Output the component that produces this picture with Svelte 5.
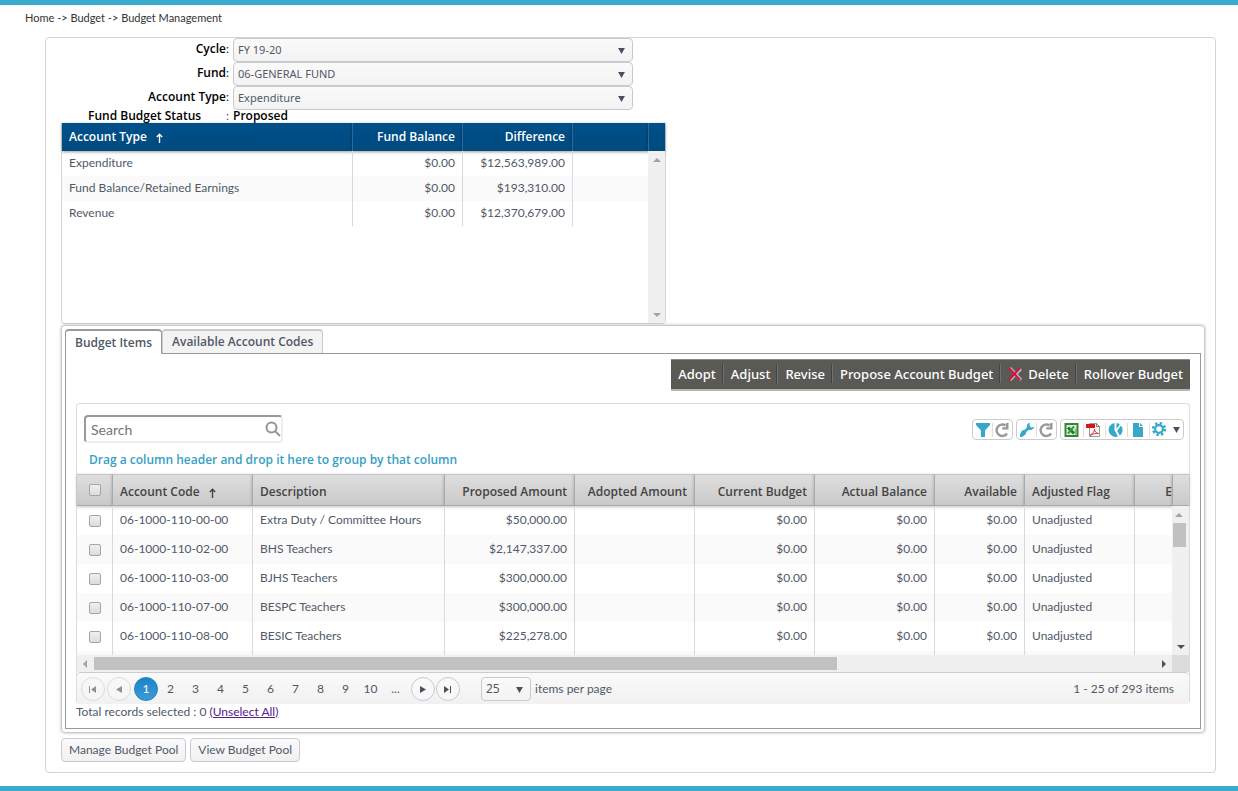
<script>
    const funds = [
        { type: "Expenditure", balance: "$0.00", difference: "$12,563,989.00" },
        { type: "Fund Balance/Retained Earnings", balance: "$0.00", difference: "$193,310.00" },
        { type: "Revenue", balance: "$0.00", difference: "$12,370,679.00" },
    ];

    const filters = [
        { id: "cycle", label: "Cycle", value: "FY 19-20" },
        { id: "fund", label: "Fund", value: "06-GENERAL FUND" },
        { id: "account-type", label: "Account Type", value: "Expenditure" },
    ];

    const items = [
        { code: "06-1000-110-00-00", description: "Extra Duty / Committee Hours", proposed: "$50,000.00" },
        { code: "06-1000-110-02-00", description: "BHS Teachers", proposed: "$2,147,337.00" },
        { code: "06-1000-110-03-00", description: "BJHS Teachers", proposed: "$300,000.00" },
        { code: "06-1000-110-07-00", description: "BESPC Teachers", proposed: "$300,000.00" },
        { code: "06-1000-110-08-00", description: "BESIC Teachers", proposed: "$225,278.00" },
    ];

    const pages = ["2", "3", "4", "5", "6", "7", "8", "9", "10", "..."];

    let search = $state("");
    let selected = $state([]);
    let activeTab = $state("items");

    function unselectAll(e) {
        e.preventDefault();
        selected = [];
    }

    function toggleAll(e) {
        selected = e.target.checked ? items.map((item) => item.code) : [];
    }
</script>

{#snippet refresh()}
    <svg viewBox="0 0 16 16" width="16" height="16">
        <path d="M13 11.500A5.700 5.700 0 1 1 11.500 3.500" fill="none" stroke="#999" stroke-width="2.400" />
        <path d="M14.500 1v6.500H8.200V5.200h3.800V1z" fill="#999" />
    </svg>
{/snippet}

<div class="page">
    <nav class="breadcrumb">Home -> Budget -> Budget Management</nav>

    <main class="panel">
        <form class="filters">
            {#each filters as filter}
                <div class="field">
                    <label for={filter.id}><b>{filter.label}</b>:</label>
                    <div class="select">
                        <select id={filter.id}>
                            <option>{filter.value}</option>
                        </select>
                        <svg viewBox="0 0 8 7" width="7" height="6"><path d="M0 0h8L4 7z" /></svg>
                    </div>
                </div>
            {/each}
            <div class="status">
                <b>Fund Budget Status</b>
                <span>:</span>
                <b>Proposed</b>
            </div>
        </form>

        <section class="fund-grid">
            <table>
                <thead>
                    <tr>
                        <th class="type">
                            Account Type
                            <svg class="sort" viewBox="0 0 7 10" width="7" height="10">
                                <path d="M3.5 10V1M.8 4L3.5 1.2 6.2 4" />
                            </svg>
                        </th>
                        <th class="money">Fund Balance</th>
                        <th class="money">Difference</th>
                        <th></th>
                    </tr>
                </thead>
                <tbody>
                    {#each funds as fund}
                        <tr>
                            <td>{fund.type}</td>
                            <td class="money">{fund.balance}</td>
                            <td class="money">{fund.difference}</td>
                            <td></td>
                        </tr>
                    {/each}
                </tbody>
            </table>
            <div class="side">
                <div class="cap"></div>
                <div class="track">
                    <svg viewBox="0 0 8 4" width="8" height="4"><path d="M0 4l4-4 4 4z" fill="#a3a3a3" /></svg>
                    <svg viewBox="0 0 8 4" width="8" height="4"><path d="M0 0h8L4 4z" fill="#a3a3a3" /></svg>
                </div>
            </div>
        </section>

        <section class="tabstrip">
            <div class="tabs" role="tablist">
                <button role="tab" class:active={activeTab === "items"} onclick={() => (activeTab = "items")}>
                    Budget Items
                </button>
                <button role="tab" class:active={activeTab === "codes"} onclick={() => (activeTab = "codes")}>
                    Available Account Codes
                </button>
            </div>

            <div class="tab-content">
                <div class="actions">
                    <button>Adopt</button>
                    <button>Adjust</button>
                    <button>Revise</button>
                    <button>Propose Account Budget</button>
                    <button>
                        <svg viewBox="0 0 14 14" width="14" height="14">
                            <path d="M2 1l11 12M13 2L2 13" stroke="#b9b9c8" stroke-width="3" />
                            <path d="M1 1l11 12M12 1L1 13" stroke="#d5103c" stroke-width="2" />
                        </svg>
                        Delete
                    </button>
                    <button>Rollover Budget</button>
                </div>

                <div class="grid">
                    <div class="grid-tools">
                        <div class="search">
                            <input type="text" placeholder="Search" aria-label="Search" bind:value={search} />
                            <svg viewBox="0 0 16 16" width="16" height="16">
                                <circle cx="6.5" cy="6.5" r="5" />
                                <path d="M10 10l5 5" />
                            </svg>
                        </div>

                        <div class="tool-groups">
                            <div class="tool-group">
                                <button aria-label="Filter">
                                    <svg viewBox="0 0 16 16" width="16" height="16">
                                        <path d="M1 1h14v2L10 8.500V15H6V8.500L1 3z" fill="#35a8cc" />
                                    </svg>
                                </button>
                                <button aria-label="Reset filter">{@render refresh()}</button>
                            </div>
                            <div class="tool-group">
                                <button aria-label="Settings">
                                    <svg viewBox="0 0 16 16" width="16" height="16">
                                        <path
                                            d="M15 5l-2.800.6-1.800-1.800.6-2.800C9 .8 7.400 3 7.900 5.400L5.400 8 3 8.600 1 12.500V15h2l3.500-2.500.8-2.400 2.600-2.300C12.500 8.600 15 7 15 5z"
                                            fill="#35a8cc"
                                        />
                                    </svg>
                                </button>
                                <button aria-label="Reset settings">{@render refresh()}</button>
                            </div>
                            <div class="tool-group exports">
                                <button aria-label="Export to Excel">
                                    <svg viewBox="0 0 16 16" width="16" height="16">
                                        <path d="M1.500 2h12v12h-12z" fill="#dcefd8" stroke="#35853a" stroke-width="2" />
                                        <path d="M4 5.500l6 6" stroke="#1f7a2c" stroke-width="3" />
                                        <path d="M10 4.500l-6 7" stroke="#2f9a3c" stroke-width="2" />
                                        <path d="M10.500 8h2M10.500 10h2M11 12h1" stroke="#35853a" />
                                    </svg>
                                </button>
                                <button aria-label="Export to PDF">
                                    <svg viewBox="0 0 16 16" width="16" height="16">
                                        <path d="M3.500 1.500h7l3 3v10h-10z" fill="#f7f7f7" stroke="#999" />
                                        <path d="M10.500 1.500v3h3" fill="none" stroke="#777" />
                                        <path d="M0 2h9v4H0z" fill="#d9151b" />
                                        <path d="M4 13.500c3-2 4.500-4 4.500-6.500 0 2.500 2 4.500 4 4.500-3-.5-5.500.5-8.500 2z" fill="none" stroke="#d63a3a" />
                                    </svg>
                                </button>
                                <button aria-label="Chart">
                                    <svg viewBox="0 0 16 16" width="16" height="16">
                                        <path d="M6.500 1v7l3.500 6.500A7 7 0 1 1 6.500 1z" fill="#35a8cc" />
                                        <path d="M8.500 1a7 7 0 0 1 3.300 1.500L8.500 7z" fill="#35a8cc" />
                                        <path d="M13 3.600a7 7 0 0 1-1.300 10L9.200 8.700z" fill="#35a8cc" />
                                    </svg>
                                </button>
                                <button aria-label="New document">
                                    <svg viewBox="0 0 16 16" width="16" height="16">
                                        <path d="M3 1h6v4h4v10H3z" fill="#35a8cc" />
                                        <path d="M10 1l3 3h-3z" fill="#35a8cc" />
                                    </svg>
                                </button>
                                <button class="gear" aria-label="Options">
                                    <svg viewBox="0 0 16 16" width="16" height="16">
                                        <circle cx="7" cy="7" r="5.8" class="teeth" />
                                        <circle cx="7" cy="7" r="3.9" class="ring" />
                                    </svg>
                                    <svg viewBox="0 0 8 7" width="7" height="6"><path d="M0 0h8L4 7z" fill="#47505e" /></svg>
                                </button>
                            </div>
                        </div>
                    </div>

                    <div class="group-hint">Drag a column header and drop it here to group by that column</div>

                    <div class="grid-view">
                        <table>
                            <colgroup>
                                <col class="w-check" />
                                <col class="w-code" />
                                <col class="w-description" />
                                <col class="w-proposed" />
                                <col class="w-amount" />
                                <col class="w-amount" />
                                <col class="w-amount" />
                                <col class="w-available" />
                                <col class="w-flag" />
                                <col />
                            </colgroup>
                            <thead>
                                <tr>
                                    <th class="check">
                                        <input
                                            type="checkbox"
                                            aria-label="Select all"
                                            checked={selected.length === items.length}
                                            onchange={toggleAll}
                                        />
                                    </th>
                                    <th>
                                        Account Code
                                        <svg class="sort" viewBox="0 0 7 10" width="7" height="10">
                                            <path d="M3.5 10V1M.8 4L3.5 1.2 6.2 4" />
                                        </svg>
                                    </th>
                                    <th>Description</th>
                                    <th class="money">Proposed Amount</th>
                                    <th class="money">Adopted Amount</th>
                                    <th class="money">Current Budget</th>
                                    <th class="money">Actual Balance</th>
                                    <th class="money">Available</th>
                                    <th>Adjusted Flag</th>
                                    <th class="clipped">E</th>
                                </tr>
                            </thead>
                            <tbody>
                                {#each items as item}
                                    <tr>
                                        <td class="check">
                                            <input
                                                type="checkbox"
                                                aria-label="Select {item.code}"
                                                value={item.code}
                                                bind:group={selected}
                                            />
                                        </td>
                                        <td>{item.code}</td>
                                        <td>{item.description}</td>
                                        <td class="money">{item.proposed}</td>
                                        <td class="money"></td>
                                        <td class="money">$0.00</td>
                                        <td class="money">$0.00</td>
                                        <td class="money">$0.00</td>
                                        <td>Unadjusted</td>
                                        <td></td>
                                    </tr>
                                {/each}
                                <tr class="peek">
                                    {#each Array(10) as _}
                                        <td></td>
                                    {/each}
                                </tr>
                            </tbody>
                        </table>
                        <div class="side">
                            <div class="cap"></div>
                            <div class="track">
                                <div>
                                    <svg viewBox="0 0 8 4" width="8" height="4"><path d="M0 4l4-4 4 4z" fill="#a3a3a3" /></svg>
                                    <div class="thumb"></div>
                                </div>
                                <svg viewBox="0 0 8 4" width="8" height="4"><path d="M0 0h8L4 4z" fill="#505050" /></svg>
                            </div>
                        </div>
                        <div class="h-track">
                            <svg viewBox="0 0 4 8" width="4" height="8"><path d="M4 0v8L0 4z" fill="#a3a3a3" /></svg>
                            <div class="rail"><div class="h-thumb"></div></div>
                            <svg viewBox="0 0 4 8" width="4" height="8"><path d="M0 0v8l4-4z" fill="#505050" /></svg>
                        </div>
                        <div class="corner"></div>
                    </div>

                    <div class="pager">
                        <button class="round" aria-label="First page" disabled>
                            <svg viewBox="0 0 8 7" width="8" height="7"><path d="M0 0h1v7H0zM7 0v7L2 3.500z" /></svg>
                        </button>
                        <button class="round prev" aria-label="Previous page" disabled>
                            <svg viewBox="0 0 6 7" width="6" height="7"><path d="M6 0v7L0 3.500z" /></svg>
                        </button>
                        <button class="round current">1</button>
                        {#each pages as page}
                            <button class="number">{page}</button>
                        {/each}
                        <button class="round next" aria-label="Next page">
                            <svg viewBox="0 0 6 7" width="6" height="7"><path d="M0 0v7l6-3.500z" /></svg>
                        </button>
                        <button class="round" aria-label="Last page">
                            <svg viewBox="0 0 8 7" width="8" height="7"><path d="M6 0h1v7H6zM0 0v7l5-3.500z" /></svg>
                        </button>
                        <div class="select page-size">
                            <select id="page-size">
                                <option>25</option>
                            </select>
                            <svg viewBox="0 0 8 7" width="7" height="6"><path d="M0 0h8L4 7z" /></svg>
                        </div>
                        <label for="page-size">items per page</label>
                        <span class="range">1 - 25 of 293 items</span>
                    </div>
                </div>

                <div class="total">
                    Total records selected : {selected.length}
                    <a href="#unselect" onclick={unselectAll}>(Unselect All)</a>
                </div>
            </div>
        </section>

        <div class="pool-buttons">
            <button>Manage Budget Pool</button>
            <button>View Budget Pool</button>
        </div>
    </main>
</div>

<style>
    :global(body) {
        background: #fff;
    }

    .page {
        box-sizing: border-box;
        min-height: 100vh;
        padding: 0 22px 13px 45px;
        border-top: 5px solid #39abcd;
        border-bottom: 5px solid #39abcd;
        font-family: Lato, "Noto Sans", sans-serif;
        font-size: 12px;
        line-height: 16px;
        color: #515967;
    }

    .page * {
        box-sizing: border-box;
    }

    button,
    select,
    input {
        font: inherit;
        color: inherit;
        margin: 0;
    }

    button {
        white-space: nowrap;
        cursor: pointer;
    }

    svg {
        display: block;
        flex: none;
    }

    .breadcrumb {
        height: 32px;
        margin-left: -20px;
        padding-top: 5px;
        font-size: 11px;
        color: #333;
    }

    .panel {
        padding: 0 10px 10px 15px;
        border: 1px solid #d5d5d5;
        border-radius: 4px;
    }

    b,
    th,
    .tabs button,
    .group-hint {
        font-family: "Open Sans", "Noto Sans", sans-serif;
        font-weight: 600;
    }

    b {
        color: #000;
    }

    /* filters */
    .field {
        display: flex;
        height: 24px;
    }

    .field label {
        width: 168px;
        padding-top: 3px;
        margin-right: 4px;
        text-align: right;
        color: #222;
    }

    .select {
        position: relative;
        width: 400px;
        height: 24px;
    }

    .select select {
        width: 100%;
        height: 100%;
        padding: 0 4px;
        appearance: none;
        border: 1px solid #c9cacf;
        border-radius: 4px;
        background: linear-gradient(#fafafa, #f3f3f3);
        font-family: "Noto Sans", sans-serif;
        font-size: 11px;
    }

    .select svg {
        position: absolute;
        right: 8px;
        top: 10px;
        fill: #47505e;
        pointer-events: none;
    }

    .status {
        display: flex;
        height: 13px;
        padding-left: 27px;
        line-height: 12px;
    }

    .status b:first-child {
        width: 138px;
    }

    .status span {
        width: 7px;
    }

    /* tables */
    table {
        width: 100%;
        table-layout: fixed;
        border-collapse: separate;
        border-spacing: 0;
    }

    th,
    td {
        padding: 0 7px;
        text-align: left;
        white-space: nowrap;
        overflow: hidden;
    }

    td {
        padding-bottom: 2px;
    }

    .money {
        text-align: right;
    }

    tbody tr:nth-child(even) {
        background: #fafafa;
    }

    .sort {
        display: inline-block;
        margin-left: 6px;
        vertical-align: -2px;
        fill: none;
        stroke: currentColor;
        stroke-width: 1.4;
    }

    .side {
        display: flex;
        flex-direction: column;
    }

    .track {
        flex: 1;
        display: flex;
        flex-direction: column;
        align-items: center;
        justify-content: space-between;
        padding: 7px 0 6px;
        background: #f0f0f0;
    }

    .fund-grid {
        display: grid;
        grid-template-columns: 1fr 17px;
        align-items: start;
        width: 605px;
        min-height: 201px;
        border: 1px solid #d5d5d5;
        border-top: 0;
        border-radius: 0 0 4px 4px;
    }

    .fund-grid .side {
        align-self: stretch;
    }

    .fund-grid th,
    .fund-grid .cap {
        height: 28px;
        color: #fff;
        background: linear-gradient(#00508a, #004a7f);
        box-shadow: 0 1px 3px rgba(0, 0, 0, 0.4);
    }

    .fund-grid th + th,
    .fund-grid .cap {
        border-left: 1px solid #2b6b9c;
    }

    .fund-grid th:last-child {
        width: 76px;
    }

    .fund-grid th.money {
        width: 110px;
    }

    .fund-grid td {
        height: 25px;
    }

    .fund-grid td + td,
    .grid td + td {
        border-left: 1px solid #d9d9d9;
    }

    /* tabs */
    .tabstrip {
        margin-top: 1px;
        padding: 3px;
        border: 1px solid #c9cacf;
        border-radius: 4px;
        box-shadow: 0 0 3px rgba(0, 0, 0, 0.3);
    }

    .tabs {
        display: flex;
        height: 24px;
    }

    .tabs button {
        height: 24px;
        padding: 0 9px;
        border: 1px solid #c9cacf;
        border-top-width: 2px;
        border-bottom: 0;
        border-radius: 4px 4px 0 0;
        background: #f3f3f4;
    }

    .tabs button.active {
        position: relative;
        height: 25px;
        border-color: #999;
        background: #fff;
    }

    .tab-content {
        padding: 5px 10px 9px;
        border: 1px solid #999;
    }

    .actions {
        display: flex;
        width: fit-content;
        height: 32px;
        margin-left: auto;
        border-top: 1px solid #888;
        border-bottom: 2px solid #b5b5b3;
        background: #595956;
    }

    .actions button {
        display: flex;
        align-items: center;
        gap: 6px;
        height: 19px;
        margin-top: 4px;
        padding: 0 7px;
        border: 0;
        background: none;
        font-family: "Noto Sans", sans-serif;
        font-size: 13px;
        font-weight: 500;
        color: #fff;
    }

    .actions button + button {
        border-left: 1px solid #71716f;
        box-shadow: -1px 0 #434341;
    }

    /* budget items grid */
    .grid {
        margin-top: 12px;
        border: 1px solid #dcdcdc;
        border-bottom: 0;
        border-radius: 4px;
    }

    .grid-tools {
        display: flex;
        justify-content: space-between;
        padding: 11px 5px 0 7px;
    }

    .search {
        position: relative;
        width: 199px;
        height: 28px;
    }

    .search input {
        width: 100%;
        height: 100%;
        padding: 0 24px 0 5px;
        border: 2px solid;
        border-color: #999 #eee #eee #999;
        border-radius: 4px;
        font-size: 14px;
    }

    .search input::placeholder {
        color: #757575;
    }

    .search svg {
        position: absolute;
        top: 6px;
        right: 2px;
        fill: none;
        stroke: #939598;
        stroke-width: 2;
    }

    .tool-groups {
        display: flex;
        gap: 3px;
        margin-top: 4px;
    }

    .tool-group {
        display: flex;
        align-items: center;
        height: 21px;
        padding: 0 1px;
        border: 1px solid #ccc;
        border-radius: 4px;
    }

    .tool-group button {
        display: flex;
        align-items: center;
        height: 14px;
        padding: 0 1px;
        border: 0;
        background: none;
    }

    .tool-group button + button {
        border-left: 1px solid #ddd;
    }

    .tool-group.exports button {
        padding: 0 3px 0 2px;
    }

    .tool-group.exports button.gear {
        gap: 5px;
        padding-right: 2px;
    }

    .teeth {
        fill: none;
        stroke: #35a8cc;
        stroke-width: 2.6;
        stroke-dasharray: 2.3 2.255;
    }

    .ring {
        fill: none;
        stroke: #35a8cc;
        stroke-width: 2.2;
    }

    .group-hint {
        height: 31px;
        padding: 9px 12px 0;
        color: #35a0c4;
    }

    .grid-view {
        display: grid;
        grid-template-columns: minmax(0, 1fr) 17px;
    }

    .grid thead th,
    .grid .cap {
        height: 32px;
        padding-top: 3px;
        border-top: 1px solid #c3c4c8;
        border-bottom: 1px solid #aaa;
        background: linear-gradient(#dedede, #c9c9c9);
        color: #444;
        box-shadow: 0 1px 3px rgba(0, 0, 0, 0.25);
    }

    .grid th + th,
    .grid .cap {
        border-left: 1px solid #aaa;
    }

    .grid td {
        height: 29px;
    }

    .grid .peek td {
        height: 4px;
    }

    .grid tr .check {
        padding: 0;
        text-align: center;
    }

    .grid thead .clipped {
        padding-right: 0;
        text-align: right;
    }

    .w-check {
        width: 35px;
    }

    .w-code {
        width: 140px;
    }

    .w-description {
        width: 192px;
    }

    .w-proposed {
        width: 130px;
    }

    .w-amount {
        width: 120px;
    }

    .w-available {
        width: 90px;
    }

    .w-flag {
        width: 110px;
    }

    input[type="checkbox"] {
        appearance: none;
        display: block;
        width: 12px;
        height: 12px;
        margin: 0 auto;
        border: 1px solid #a5a5a5;
        border-radius: 2px;
        background: linear-gradient(#f0f0f0, #dcdcdc);
    }

    input[type="checkbox"]:checked {
        background: #35a8cc;
    }

    .thumb {
        width: 13px;
        height: 24px;
        margin: 6px 0 0 -2px;
        background: #c1c1c1;
    }

    .h-track {
        display: flex;
        align-items: center;
        gap: 7px;
        height: 17px;
        padding: 0 6px;
        background: #f0f0f0;
    }

    .rail {
        flex: 1;
    }

    .h-thumb {
        width: 70%;
        height: 13px;
        background: #c1c1c1;
    }

    .corner {
        background: #dcdcdc;
    }

    .pager {
        display: flex;
        align-items: center;
        height: 32px;
        padding: 1px 15px 0 4px;
        border-top: 1px solid #ccc;
        border-radius: 4px;
        background: linear-gradient(#fafafa, #f1f1f1);
    }

    .round {
        display: flex;
        align-items: center;
        justify-content: center;
        width: 24px;
        height: 24px;
        padding: 0;
        margin-right: 1px;
        border: 1px solid #c9cacf;
        border-radius: 50%;
        background: #f8f8f8;
        fill: #47505e;
    }

    .round:disabled {
        opacity: 0.6;
    }

    .round.prev {
        margin: 0 3px 0 1px;
    }

    .round.current {
        margin-right: 0;
        border-color: #1983c9;
        background: linear-gradient(#1983c9, #409bd6);
        color: #fff;
    }

    .number {
        width: 25px;
        padding: 0;
        border: 0;
        background: none;
    }

    .round.next {
        margin-left: 3px;
    }

    .select.page-size {
        width: 50px;
        margin: 0 4px 0 20px;
    }

    .page-size select {
        font-size: 12px;
    }

    .range {
        margin-left: auto;
    }

    .total {
        line-height: 15px;
    }

    .total a {
        color: #551a8b;
    }

    .pool-buttons {
        display: flex;
        gap: 4px;
        margin-top: 5px;
    }

    .pool-buttons button {
        height: 24px;
        padding: 0 7px;
        border: 1px solid #c9cacf;
        border-radius: 4px;
        background: linear-gradient(#fafafa, #f1f1f1);
    }
</style>
